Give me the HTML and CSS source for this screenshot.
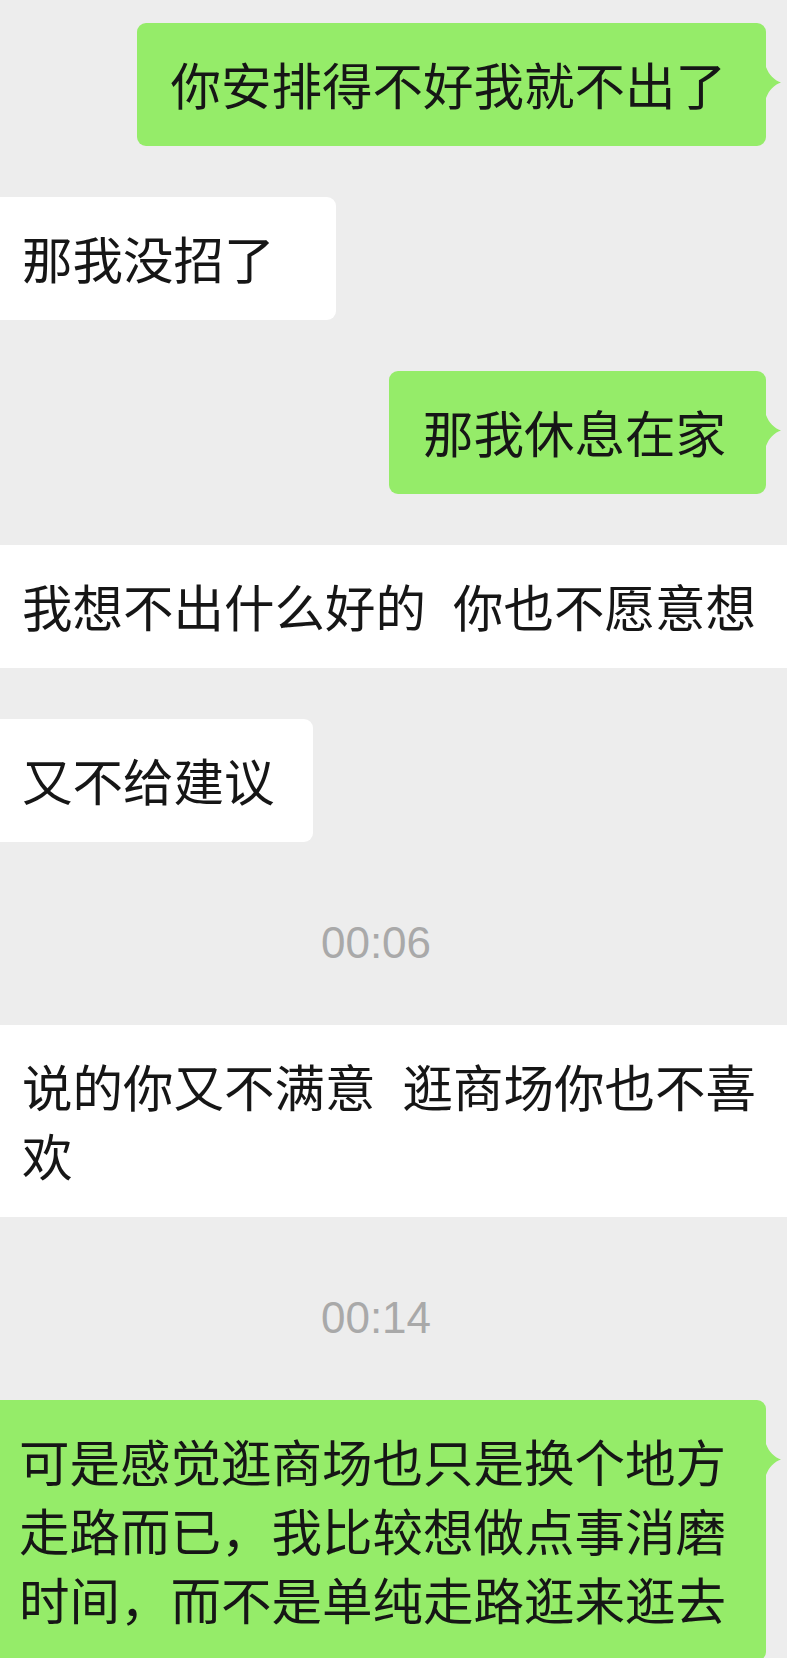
FILE: index.html
```html
<!DOCTYPE html>
<html lang="zh-CN">
<head>
<meta charset="utf-8">
<title>聊天记录</title>
<link rel="stylesheet" href="styles.css">
</head>
<body>
<main class="chat">
  <div class="row row-out"><div class="bubble bubble-out">你安排得不好我就不出了</div></div>
  <div class="row row-in"><div class="bubble bubble-in bubble-wide-pad">那我没招了</div></div>
  <div class="row row-out"><div class="bubble bubble-out">那我休息在家</div></div>
  <div class="row row-in"><div class="bubble bubble-in bubble-full">我想不出什么好的<span class="gap">&nbsp;&nbsp;</span>你也不愿意想</div></div>
  <div class="row row-in"><div class="bubble bubble-in">又不给建议</div></div>
  <div class="time">00:06</div>
  <div class="row row-in"><div class="bubble bubble-in bubble-full">说的你又不满意<span class="gap">&nbsp;&nbsp;</span>逛商场你也不喜欢</div></div>
  <div class="time">00:14</div>
  <div class="row row-out"><div class="bubble bubble-out bubble-long">可是感觉逛商场也只是换个地方走路而已，我比较想做点事消磨时间，而不是单纯走路逛来逛去</div></div>
</main>
</body>
</html>
```

FILE: styles.css
```css
html, body {
  margin: 0;
  padding: 0;
}

body {
  background: #ededed;
  overflow: hidden;
}

.chat {
  display: flex;
  flex-direction: column;
  gap: 51px;
  padding-top: 23px;
  font-family: "Noto Sans CJK SC", "Noto Sans", sans-serif;
}

.row {
  display: flex;
}

.row-out {
  justify-content: flex-end;
  padding-right: 21px;
}

.row-in {
  justify-content: flex-start;
}

.bubble {
  position: relative;
  font-size: 50.5px;
  line-height: 69px;
  padding: 26px 0 28px;
  color: #161616;
  border-radius: 9px;
}

.bubble-out {
  background: #95ec69;
  padding-left: 34px;
  padding-right: 40px;
}

.bubble-out::after {
  content: "";
  position: absolute;
  right: -15px;
  top: 44px;
  width: 15px;
  height: 31px;
  background: #95ec69;
  clip-path: path("M0 0 C3 8 8 13 15 15.5 C8 18 3 23 0 31 Z");
}

.bubble-in {
  background: #ffffff;
  padding-left: 22px;
  padding-right: 38px;
  border-radius: 0 9px 9px 0;
}

.bubble-wide-pad {
  padding-right: 61px;
}

.bubble-full {
  flex: 1;
  padding-right: 20px;
  border-radius: 0;
}

.bubble-long {
  flex: 1;
  padding-left: 19px;
  padding-right: 38px;
  border-radius: 0 9px 9px 0;
}

.gap {
  display: inline-block;
  width: 27px;
}

.time {
  font-family: "Liberation Sans", Arial, sans-serif;
  font-size: 44px;
  line-height: 52px;
  color: #a9a9a9;
  text-align: center;
  padding: 24px 35px 5px 0;
}
```
